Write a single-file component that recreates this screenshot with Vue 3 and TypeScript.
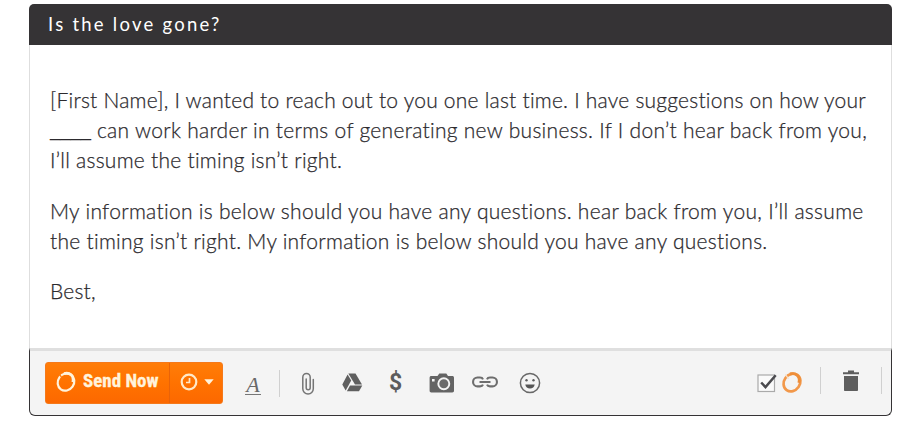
<script setup lang="ts">
interface Line {
  blank?: string
  text: string
  cls: string
}

const subject = 'Is the love gone?'
const paragraphs: Line[][] = [
  [
    { text: '[First Name], I wanted to reach out to you one last time. I have suggestions on how your', cls: 'l1' },
    { blank: '____', text: ' can work harder in terms of generating new business. If I don’t hear back from you,', cls: 'l2' },
    { text: 'I’ll assume the timing isn’t right.', cls: 'l3' },
  ],
  [
    { text: 'My information is below should you have any questions. hear back from you, I’ll assume', cls: 'l4' },
    { text: 'the timing isn’t right. My information is below should you have any questions.', cls: 'l5' },
  ],
  [{ text: 'Best,', cls: 'l6' }],
]
</script>

<template>
  <main class="page">
    <article class="card">
      <header class="head">{{ subject }}</header>
      <section class="body">
        <p v-for="(lines, i) in paragraphs" :key="i">
          <span v-for="line in lines" :key="line.cls" class="line" :class="line.cls"><span v-if="line.blank" class="blank">{{ line.blank }}</span>{{ line.text }}</span>
        </p>
      </section>
      <footer class="bar">
        <div class="send">
          <button class="send-main">
            <svg width="22" height="22" viewBox="0 0 22 22" fill="none">
              <ellipse cx="11" cy="11" rx="8" ry="9" transform="rotate(35 11 11)" stroke="#fff3dc" stroke-width="2.2" />
              <path d="M4.300 3.200l3 4.200" stroke="#ff7a0a" stroke-width="1.300" />
              <path d="M9 2.600c6-1.500 10.500 2.600 8.800 8.600" stroke="#fff3dc" stroke-width="2.800" />
            </svg>
            <span class="send-text">Send Now</span>
          </button>
          <button class="send-later">
            <svg width="18" height="18" viewBox="0 0 18 18" fill="none" stroke="#ffe9c8">
              <circle cx="9" cy="9" r="7.300" stroke-width="2.200" />
              <path d="M9.500 5v4.500H6" stroke-width="1.700" />
            </svg>
            <svg class="caret" width="10" height="6" viewBox="0 0 10 6"><path d="M.3.300h9.400L5 5.700z" fill="#fff3dc" /></svg>
          </button>
        </div>

        <span class="format">A</span>
        <i class="rule r1"></i>

        <svg class="clip" width="14" height="24" viewBox="0 0 14 24" fill="none" stroke="#757575" stroke-width="1.500" stroke-linecap="round">
          <path d="M12.300 7.500v9.300a5.200 5.200 0 0 1-10.500 0V5.200a3.700 3.700 0 0 1 7.400 0v10.600a2 2 0 0 1-4 0V7" />
        </svg>

        <svg class="drive" width="21" height="19" viewBox="0 0 21 19" fill="#5f5f5f">
          <path d="M6.300.500h7.200l6.500 11h-7z" />
          <path d="M5.600 1.500l3.600 6.100-5.500 10L.300 11.500z" />
          <path d="M8 12.500h12.300l-3.300 5.700H4.900z" />
        </svg>

        <span class="dollar">$</span>

        <svg class="camera" width="26" height="20" viewBox="0 0 26 20">
          <path d="M2.300 3h6.200l1.800-2.500h7L19 3h4.300c1 0 1.700.7 1.700 1.700v13c0 1-.7 1.700-1.700 1.700h-21C1.300 19.400.600 18.700.600 17.700v-13C.600 3.700 1.300 3 2.300 3z" fill="#646464" />
          <circle cx="14.800" cy="10.700" r="5.500" fill="#6a6a6a" stroke="#f4f4f4" stroke-width="1.900" />
          <rect x="3" y="6" width="2.600" height="2.500" fill="#f4f4f4" />
        </svg>

        <svg class="link" width="26" height="12" viewBox="0 0 26 12" fill="none" stroke="#6d6d6d" stroke-width="2.100">
          <path d="M11 3.300C10.500 2 9.500 1.500 8 1.500H5.500a4.400 4.400 0 0 0 0 8.900H8c1.500 0 2.500-.5 3-1.800M15 3.300c.5-1.300 1.500-1.800 3-1.800h2.500a4.400 4.400 0 0 1 0 8.900H18c-1.500 0-2.500-.5-3-1.800M7.500 6h11" />
        </svg>

        <svg class="smile" width="22" height="22" viewBox="0 0 22 22">
          <circle cx="11" cy="11" r="9.600" fill="none" stroke="#686868" stroke-width="1.500" />
          <circle cx="7.500" cy="8.300" r="1.200" fill="#5c5c5c" />
          <circle cx="14.500" cy="8.300" r="1.200" fill="#5c5c5c" />
          <path d="M6.300 12.500h9.400c-.4 2.700-2.200 4-4.700 4s-4.300-1.300-4.700-4z" fill="#565656" />
        </svg>

        <svg class="check" width="21" height="20" viewBox="0 0 21 20" fill="none">
          <rect x="1" y="2" width="16.500" height="16.500" fill="#fafafa" stroke="#aaa" stroke-width="1.200" />
          <path d="M4.200 9.500l4.300 4.600L18.700 2.300" stroke="#4b4b4f" stroke-width="2.500" />
        </svg>

        <svg class="ring" width="22" height="23" viewBox="0 0 22 23" fill="none">
          <ellipse cx="11" cy="11.500" rx="8" ry="9.300" transform="rotate(35 11 11.500)" stroke="#f2984a" stroke-width="2.700" />
          <path d="M4.500 3.500l3 4.400" stroke="#f7dfc8" stroke-width="1.300" />
          <path d="M9 3c6-1.700 10.700 2.800 8.900 8.800" stroke="#ee8e39" stroke-width="2.900" />
        </svg>

        <i class="rule r2"></i>

        <svg class="trash" width="18" height="22" viewBox="0 0 18 22" fill="#5e5e5e">
          <path d="M6 .500h6v1.800h5v2H1v-2h5zM2 6h14v14c0 .7-.5 1-1 1H3c-.5 0-1-.3-1-1z" />
        </svg>

        <i class="rule r3"></i>
      </footer>
    </article>
  </main>
</template>

<style>
body {
  background: #fff;
}
</style>

<style scoped>
.page {
  box-sizing: border-box;
  width: 921px;
  height: 427px;
  padding: 4px 29px 0;
  background: #fff;
}
.card {
  display: flex;
  flex-direction: column;
  width: 863px;
  height: 412px;
  font-family: Lato, 'Open Sans', sans-serif;
}
.head {
  box-sizing: border-box;
  height: 41px;
  padding-left: 19px;
  border-radius: 5px 5px 0 0;
  background: #353335;
  color: #fff;
  font-size: 18.500px;
  line-height: 41px;
  letter-spacing: 2.250px;
}
.body {
  box-sizing: border-box;
  height: 303px;
  padding: 40px 0 0 20px;
  border: solid #dedede;
  border-width: 0 1px;
  color: #2c2a2e;
  font-size: 21px;
  font-weight: 300;
  line-height: 30px;
  -webkit-text-stroke: 0.250px #2c2a2e;
}
p {
  margin: 0 0 20.500px;
}
.line {
  display: block;
  white-space: pre;
}
.blank {
  font: 300 18.400px/20px 'Liberation Sans', sans-serif;
  letter-spacing: 0;
  vertical-align: 2px;
  -webkit-text-stroke: 0;
}
.bar {
  box-sizing: border-box;
  display: flex;
  align-items: flex-start;
  height: 68px;
  padding: 0 0 0 15px;
  border: 1px solid #353335;
  border-top: 3px solid #dfdfdf;
  border-radius: 0 0 6px 6px;
  background: #f4f4f4;
}
.bar > * {
  flex: none;
}
.send {
  display: flex;
  box-sizing: border-box;
  width: 178px;
  height: 42px;
  margin-top: 11px;
  border: 1px solid #f5791a;
  border-radius: 3px;
  background: linear-gradient(#ff7d08, #ff7200 50%, #fc6800);
}
button {
  display: flex;
  align-items: center;
  box-sizing: border-box;
  height: 38px;
  border: 0;
  padding: 0;
  background: none;
}
.send-main {
  width: 123px;
  padding-left: 9px;
}
.send-text {
  width: 76px;
  margin: -3px 0 0 6px;
  color: #fff3dc;
  font: 700 19px Roboto, sans-serif;
  font-stretch: condensed;
  text-align: left;
  white-space: nowrap;
  -webkit-text-stroke: 0.300px #fff3dc;
}
.send-later {
  width: 53px;
  height: 40px;
  padding: 0 0 2px 10px;
  border-left: 1px solid #e96308;
}
.caret {
  margin-left: 6px;
}
.format {
  width: 16px;
  height: 18px;
  margin: 25px 0 0 22px;
  border-bottom: 1.500px solid #777;
  color: #686868;
  font: italic 22px/17px 'Liberation Serif', serif;
  text-align: center;
}
.rule {
  width: 1px;
  height: 27px;
  background: #d0d0d0;
}
.r1 { margin: 19px 0 0 18px; }
.clip { margin: 21px 0 0 21px; }
.drive { margin: 22px 0 0 27px; }
.dollar {
  width: 15px;
  margin: 19px 0 0 25px;
  color: #5c5c5c;
  font: 700 23px/26px Roboto, sans-serif;
  text-align: center;
}
.camera { margin: 22px 0 0 26px; }
.link { margin: 25px 0 0 17px; }
.smile { margin: 21px 0 0 21px; }
.check { margin: 22px 0 0 216px; }
.ring { margin: 20px 0 0 3px; }
.r2 { margin: 16px 0 0 17px; }
.trash { margin: 19px 0 0 21px; }
.r3 { margin: 16px 0 0 21px; }
.l1 { letter-spacing: 0.230px; }
.l2 { letter-spacing: 0.290px; }
.l3 { letter-spacing: 0.260px; }
.l4 { letter-spacing: 0.300px; }
.l5 { letter-spacing: 0.270px; }
.l6 { letter-spacing: 0.200px; }
</style>
